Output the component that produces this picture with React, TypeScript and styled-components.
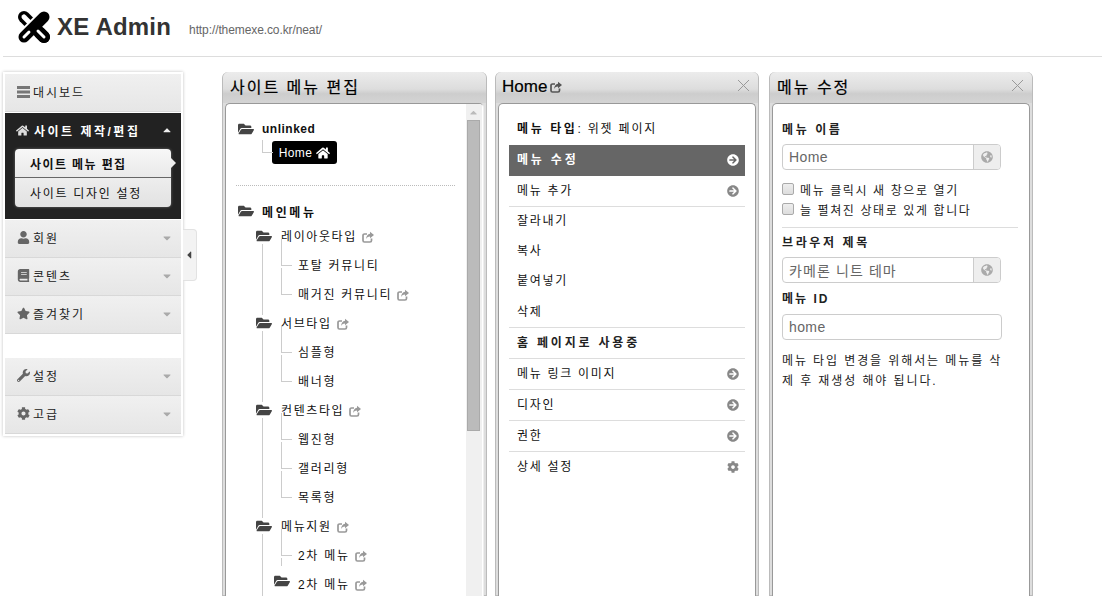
import React from "react";
import styled, { createGlobalStyle } from "styled-components";
import {
  FaArrowCircleRight,
  FaBook,
  FaCaretDown,
  FaCaretLeft,
  FaCaretUp,
  FaCog,
  FaFolderOpen,
  FaGlobeAmericas,
  FaHome,
  FaStar,
  FaUser,
  FaWrench,
} from "react-icons/fa";

const KO = `"Liberation Sans", "Noto Sans CJK KR", sans-serif`;

const GlobalStyle = createGlobalStyle`
  html, body { margin: 0; padding: 0; height: 596px; overflow: hidden; background: #fff; }
  body { font-family: ${KO}; font-size: 12px; color: #111; }
  * { box-sizing: border-box; }
`;

function Logo() {
  return (
    <svg width="34" height="34" viewBox="0 0 34 34">
      <path d="M7 7 L27 27" stroke="#000" strokeWidth="12" strokeLinecap="round" />
      <path d="M7 7 L13 13" stroke="#fff" strokeWidth="5" strokeLinecap="round" />
      <path d="M27 7 L7 27" stroke="#fff" strokeWidth="15" />
      <path d="M27 7 L7 27" stroke="#000" strokeWidth="11" strokeLinecap="round" />
      <path d="M7 27 L12 22" stroke="#fff" strokeWidth="3" strokeLinecap="round" />
      <path d="M19 19 L27 27" stroke="#000" strokeWidth="12" strokeLinecap="round" />
      <path d="M21 21 L27 27" stroke="#fff" strokeWidth="3" strokeLinecap="round" />
    </svg>
  );
}

function ListIcon() {
  return (
    <svg width="13" height="12" viewBox="0 0 13 12">
      <path d="M0 0h13v3H0zM0 4.500h13v3H0zM0 9h13v3H0z" fill="#777" />
    </svg>
  );
}

function LinkGlyph({ color = "#999" }: { color?: string }) {
  return (
    <svg width="12" height="12" viewBox="0 0 12 12">
      <path
        d="M9.500 7.500v2a1.500 1.500 0 0 1-1.500 1.500H2.500A1.500 1.500 0 0 1 1 9.500v-5A1.500 1.500 0 0 1 2.500 3H5"
        fill="none"
        stroke={color}
        strokeWidth="1.700"
      />
      <path d="M8 .800 12 4 8 7.200V5.500C6.200 5.500 5 6.300 4.200 8 4.200 5.300 5.600 3 8 2.700z" fill={color} />
    </svg>
  );
}

const sideMenu = [
  { label: "회원", icon: <FaUser /> },
  { label: "콘텐츠", icon: <FaBook /> },
  { label: "즐겨찾기", icon: <FaStar /> },
];

const sideMenuBottom = [
  { label: "설정", icon: <FaWrench /> },
  { label: "고급", icon: <FaCog /> },
];

const actions = [
  { label: "메뉴 수정", active: true, arrow: true, h: 31 },
  { label: "메뉴 추가", arrow: true, line: true, h: 31 },
  { label: "잘라내기", h: 30 },
  { label: "복사", h: 30 },
  { label: "붙여넣기", h: 30 },
  { label: "삭제", line: true, h: 31 },
  { label: "홈 페이지로 사용중", bold: true, line: true, h: 31 },
  { label: "메뉴 링크 이미지", arrow: true, line: true, h: 31 },
  { label: "디자인", arrow: true, line: true, h: 31 },
  { label: "권한", arrow: true, line: true, h: 31 },
  { label: "상세 설정", cog: true, h: 31 },
];

const groups = [
  { label: "레이아웃타입", items: [{ t: "포탈 커뮤니티" }, { t: "매거진 커뮤니티", link: true }] },
  { label: "서브타입", items: [{ t: "심플형" }, { t: "배너형" }] },
  { label: "컨텐츠타입", items: [{ t: "웹진형" }, { t: "갤러리형" }, { t: "목록형" }] },
  { label: "메뉴지원", items: [{ t: "2차 메뉴", link: true }, { t: "2차 메뉴", link: true, folder: true }] },
];

export default function App() {
  return (
    <>
      <GlobalStyle />
      <Header>
        <Logo />
        <Brand>XE Admin</Brand>
        <SiteUrl>http://themexe.co.kr/neat/</SiteUrl>
      </Header>
      <Main>
        <Sidebar>
          <SideItem>
            <SideIcon><ListIcon /></SideIcon>대시보드
          </SideItem>
          <SideOpen>
            <SideOpenTitle>
              <SideIcon $light><FaHome /></SideIcon>사이트 제작/편집
              <Caret $light><FaCaretUp /></Caret>
            </SideOpenTitle>
            <SubMenu>
              <SubItem $current>사이트 메뉴 편집</SubItem>
              <SubItem>사이트 디자인 설정</SubItem>
            </SubMenu>
          </SideOpen>
          {sideMenu.map(m => (
            <SideItem key={m.label}>
              <SideIcon>{m.icon}</SideIcon>{m.label}
              <Caret><FaCaretDown /></Caret>
            </SideItem>
          ))}
          <SideGap />
          {sideMenuBottom.map(m => (
            <SideItem key={m.label}>
              <SideIcon>{m.icon}</SideIcon>{m.label}
              <Caret><FaCaretDown /></Caret>
            </SideItem>
          ))}
        </Sidebar>
        <Handle><FaCaretLeft /></Handle>
        <Panels>
          <Panel $w={265}>
            <PanelHead><PanelTitle>사이트 메뉴 편집</PanelTitle></PanelHead>
            <TreeBody>
              <Tree>
                <RootRow $latin><Folder><FaFolderOpen /></Folder>unlinked</RootRow>
                <BadgeRow>
                  <Badge>Home <FaHome size={14} /></Badge>
                </BadgeRow>
                <Dotted />
                <RootRow><Folder><FaFolderOpen /></Folder>메인메뉴</RootRow>
                <Groups>
                  {groups.map(g => (
                    <div key={g.label}>
                      <GroupRow>
                        <Folder><FaFolderOpen /></Folder>
                        <span>{g.label}</span>
                        <LinkIcon><LinkGlyph /></LinkIcon>
                      </GroupRow>
                      {g.items.map((it, i) => (
                        <LeafRow key={i} $folder={it.folder}>
                          {it.folder && <LeafFolder><FaFolderOpen /></LeafFolder>}
                          <span>{it.t}</span>
                          {it.link && <LinkIcon><LinkGlyph /></LinkIcon>}
                        </LeafRow>
                      ))}
                    </div>
                  ))}
                </Groups>
              </Tree>
              <ScrollBar>
                <ScrollArrow><FaCaretUp /></ScrollArrow>
                <ScrollThumb />
              </ScrollBar>
            </TreeBody>
          </Panel>
          <Panel $w={264}>
            <PanelHead>
              <HomeTitle>Home <LinkGlyph color="#555" /></HomeTitle>
              <Close />
            </PanelHead>
            <MenuBody>
              <TypeRow><b>메뉴 타입</b>: 위젯 페이지</TypeRow>
              {actions.map(a => (
                <ActionRow key={a.label} $active={a.active} $line={a.line} $bold={a.bold} $h={a.h}>
                  {a.label}
                  {a.arrow && <ActionIcon $active={a.active}><FaArrowCircleRight /></ActionIcon>}
                  {a.cog && <ActionIcon><FaCog /></ActionIcon>}
                </ActionRow>
              ))}
            </MenuBody>
          </Panel>
          <Panel $w={264}>
            <PanelHead>
              <PanelTitle>메뉴 수정</PanelTitle>
              <Close />
            </PanelHead>
            <FormBody>
              <Label>메뉴 이름</Label>
              <InputGroup>
                <InputText>Home</InputText>
                <Addon><FaGlobeAmericas /></Addon>
              </InputGroup>
              <Checks>
                <CheckRow><CheckBox />메뉴 클릭시 새 창으로 열기</CheckRow>
                <CheckRow><CheckBox />늘 펼쳐진 상태로 있게 합니다</CheckRow>
              </Checks>
              <Rule />
              <Label>브라우저 제목</Label>
              <InputGroup>
                <InputText $wide>카메론 니트 테마</InputText>
                <Addon><FaGlobeAmericas /></Addon>
              </InputGroup>
              <Label $tight>메뉴 ID</Label>
              <PlainInput>home</PlainInput>
              <Help>메뉴 타입 변경을 위해서는 메뉴를 삭제 후 재생성 해야 됩니다.</Help>
            </FormBody>
          </Panel>
        </Panels>
      </Main>
    </>
  );
}

const Header = styled.header`
  height: 57px;
  margin-left: 3px;
  padding: 0 0 3px 14px;
  display: flex;
  align-items: center;
  border-bottom: 1px solid #ddd;
`;

const Brand = styled.div`
  margin-left: 6px;
  font-size: 24px;
  font-weight: 700;
  color: #333;
  letter-spacing: 0.2px;
`;

const SiteUrl = styled.div`
  margin: 6px 0 0 18px;
  font-size: 12px;
  letter-spacing: -0.1px;
  color: #666;
`;

const Main = styled.main`
  display: flex;
  align-items: flex-start;
  padding: 15px 0 0 3px;
`;

const Sidebar = styled.nav`
  width: 180px;
  flex: none;
  padding: 2px;
  background: #fff;
  box-shadow: 0 0 3px rgba(0, 0, 0, 0.25);
  display: flex;
  flex-direction: column;
`;

const SideItem = styled.div`
  height: 38px;
  padding: 0 0 2px 12px;
  display: flex;
  align-items: center;
  font-size: 12px;
  letter-spacing: 2px;
  color: #222;
  background: linear-gradient(#f0f0f0, #e6e6e6);
  border-bottom: 1px solid #d8d8d8;
`;

const SideIcon = styled.span<{ $light?: boolean }>`
  width: ${p => (p.$light ? 18 : 16)}px;
  display: inline-flex;
  font-size: 13px;
  color: ${p => (p.$light ? "#ddd" : "#666")};
`;

const Caret = styled.span<{ $light?: boolean }>`
  margin-left: auto;
  margin-right: 8px;
  display: inline-flex;
  font-size: 12px;
  color: ${p => (p.$light ? "#eee" : "#aaa")};
`;

const SideOpen = styled.div`
  height: 106px;
  margin: 1px 0;
  background: #222;
`;

const SideOpenTitle = styled.div`
  height: 34px;
  padding-left: 11px;
  display: flex;
  align-items: center;
  font-size: 12px;
  font-weight: 700;
  letter-spacing: 2.500px;
  color: #fff;
`;

const SubMenu = styled.div`
  margin: 2px 10px 0;
  border-radius: 4px;
  box-shadow: 0 0 3px rgba(255, 255, 255, 0.35);
`;

const SubItem = styled.div<{ $current?: boolean }>`
  position: relative;
  height: 29px;
  padding-left: 15px;
  display: flex;
  align-items: center;
  font-size: 12px;
  letter-spacing: ${p => (p.$current ? 1.400 : 1.700)}px;
  font-weight: ${p => (p.$current ? 700 : 400)};
  color: #111;
  background: ${p => (p.$current ? "linear-gradient(#f7f7f7, #e9e9e9)" : "linear-gradient(#ededed, #e2e2e2)")};
  border-radius: ${p => (p.$current ? "4px 4px 0 0" : "0 0 4px 4px")};
  border-bottom: ${p => (p.$current ? "1px solid #666" : "0")};

  ${p =>
    p.$current &&
    `&::after {
      content: "";
      position: absolute;
      right: -5px;
      top: 9px;
      border-left: 5px solid #eee;
      border-top: 5px solid transparent;
      border-bottom: 5px solid transparent;
    }`}
`;

const SideGap = styled.div`
  height: 24px;
`;

const Handle = styled.div`
  width: 14px;
  height: 52px;
  margin-top: 157px;
  flex: none;
  display: flex;
  align-items: center;
  font-size: 12px;
  color: #444;
  background: #f3f3f3;
  border: 1px solid #e2e2e2;
  border-left: 0;
  border-radius: 0 4px 4px 0;
`;

const Panels = styled.div`
  display: flex;
  margin-left: 25px;
  gap: 8px;
`;

const Panel = styled.section<{ $w: number }>`
  width: ${p => p.$w}px;
  height: 524px;
  flex: none;
  padding: 0 2px;
  background: #ddd;
  border: 1px solid #bbb;
  border-top: 0;
  border-radius: 6px 6px 0 0;

  & + & + & {
    margin-left: 2px;
  }
`;

const PanelHead = styled.div`
  position: relative;
  height: 31px;
  margin: 0 -2px;
  padding: 0 0 3px 7px;
  display: flex;
  align-items: center;
  border-radius: 6px 6px 0 0;
  background: linear-gradient(#ececec 0, #dddddd 55%, #cdcdcd 70%, #d4d4d4 100%);
`;

const PanelTitle = styled.h2`
  margin: 0;
  font-size: 16px;
  font-weight: 400;
  letter-spacing: 2px;
  color: #000;
  -webkit-text-stroke: 0.2px #000;
`;

const HomeTitle = styled(PanelTitle)`
  margin-left: -1px;
  font-size: 17px;
  letter-spacing: 0;
  display: flex;
  align-items: center;
  gap: 3px;
  padding-top: 2px;
`;

const Close = styled.span`
  position: absolute;
  right: 9px;
  top: 8px;
  width: 11px;
  height: 11px;
  background:
    linear-gradient(45deg, transparent 46%, #999 46%, #999 54%, transparent 54%),
    linear-gradient(-45deg, transparent 46%, #999 46%, #999 54%, transparent 54%);
`;

const TreeBody = styled.div`
  height: 493px;
  display: flex;
  background: #fff;
  border: 1px solid #999;
  border-bottom: 0;
  border-right-color: #eee;
  border-radius: 5px 5px 0 0;
  overflow: hidden;
`;

const Tree = styled.div`
  flex: 1;
  min-width: 0;
  padding: 13px 0 0 10px;
`;

const RootRow = styled.div<{ $latin?: boolean }>`
  height: 24px;
  padding-left: 2px;
  display: flex;
  align-items: center;
  gap: 7px;
  font-size: 12px;
  font-weight: 700;
  letter-spacing: ${p => (p.$latin ? 0.500 : 2.600)}px;
  color: #111;
`;

const Folder = styled.span`
  width: 17px;
  display: inline-flex;
  font-size: 16px;
  color: #444;
`;

const BadgeRow = styled.div`
  position: relative;
  height: 24px;
  padding-left: 36px;

  &::before {
    content: "";
    position: absolute;
    left: 26px;
    top: -1px;
    width: 10px;
    height: 12px;
    border-left: 1px solid #ccc;
    border-bottom: 1px solid #ccc;
  }
`;

const Badge = styled.div`
  width: 65px;
  height: 23px;
  display: flex;
  align-items: center;
  justify-content: center;
  gap: 4px;
  font-size: 12px;
  letter-spacing: 0.4px;
  color: #fff;
  background: #000;
  border-radius: 3px;
`;

const Dotted = styled.div`
  width: 219px;
  margin: 20px 0 13px;
  border-top: 1px dotted #bbb;
`;

const Groups = styled.div`
  position: relative;
  padding-left: 20px;
  margin-top: -2px;

  &::before {
    content: "";
    position: absolute;
    left: 26px;
    top: 20px;
    bottom: -40px;
    border-left: 1px solid #ccc;
  }
`;

const GroupRow = styled.div`
  position: relative;
  z-index: 1;
  height: 29px;
  display: flex;
  align-items: center;
  font-size: 12px;
  letter-spacing: 1.600px;

  ${Folder} {
    margin-right: 8px;
    background: #fff;
  }
`;

const LeafRow = styled.div<{ $folder?: boolean }>`
  position: relative;
  height: 29px;
  padding-left: 42px;
  display: flex;
  align-items: center;
  font-size: 12px;
  letter-spacing: 1.700px;

  &::before {
    content: "";
    position: absolute;
    left: 25px;
    top: -11px;
    width: 10px;
    height: ${p => (p.$folder ? 8 : 26)}px;
    border-left: 1px solid #ccc;
    border-bottom: ${p => (p.$folder ? "0" : "1px solid #ccc")};
  }
`;

const LeafFolder = styled.span`
  position: absolute;
  left: 18px;
  top: 4px;
  display: inline-flex;
  font-size: 16px;
  color: #444;
`;

const LinkIcon = styled.span`
  margin-left: 5px;
  display: inline-flex;
  padding-top: 2px;
`;

const ScrollBar = styled.div`
  width: 16px;
  flex: none;
  margin-right: 1px;
  padding: 1px 2px 0 1px;
  background: #f0f0f0;
`;

const ScrollArrow = styled.div`
  height: 15px;
  display: flex;
  justify-content: center;
  align-items: center;
  font-size: 11px;
  color: #bbb;
`;

const ScrollThumb = styled.div`
  height: 311px;
  background: #bbb;
  border: 1px solid #aaa;
`;

const MenuBody = styled(TreeBody)`
  display: block;
  border-right-color: #999;
  padding: 6px 10px 0;
`;

const TypeRow = styled.div`
  height: 35px;
  padding-left: 8px;
  display: flex;
  align-items: center;
  font-size: 12px;
  letter-spacing: 1.800px;
  white-space: pre-wrap;

  b {
    letter-spacing: 2.600px;
  }
`;

const ActionRow = styled.div<{ $active?: boolean; $line?: boolean; $bold?: boolean; $h: number }>`
  height: ${p => p.$h}px;
  padding: 0 6px 4px 8px;
  display: flex;
  align-items: center;
  justify-content: space-between;
  font-size: 12px;
  letter-spacing: ${p => (p.$active || p.$bold ? 2.800 : 1.700)}px;
  font-weight: ${p => (p.$active || p.$bold ? 700 : 400)};
  color: ${p => (p.$active ? "#fff" : p.$bold ? "#222" : "#111")};
  background: ${p => (p.$active ? "#666" : "transparent")};
  border-bottom: 1px solid ${p => (p.$line ? "#ddd" : "transparent")};
`;

const ActionIcon = styled.span<{ $active?: boolean }>`
  margin-top: 4px;
  display: inline-flex;
  font-size: 12px;
  color: ${p => (p.$active ? "#fff" : "#888")};
`;

const FormBody = styled(TreeBody)`
  display: block;
  border-right-color: #999;
  padding: 15px 11px 0 9px;
`;

const Label = styled.div<{ $tight?: boolean }>`
  height: 18px;
  margin-top: ${p => (p.$tight ? "5px" : "0")};
  display: flex;
  align-items: center;
  font-size: 12px;
  font-weight: 700;
  letter-spacing: ${p => (p.$tight ? 2 : 2.600)}px;
  color: #222;
`;

const InputGroup = styled.div`
  width: 219px;
  height: 26px;
  margin-top: 7px;
  display: flex;
  border: 1px solid #ccc;
  border-radius: 4px;
  overflow: hidden;
`;

const InputText = styled.div<{ $wide?: boolean }>`
  flex: 1;
  padding-left: 6px;
  display: flex;
  align-items: center;
  font-size: 14px;
  letter-spacing: ${p => (p.$wide ? 1.100 : 0.400)}px;
  color: #666;
`;

const Addon = styled.div`
  width: 27px;
  display: flex;
  align-items: center;
  justify-content: center;
  font-size: 12px;
  color: #aaa;
  background: #eee;
  border-left: 1px solid #ccc;
`;

const Checks = styled.div`
  margin-top: 9px;
`;

const CheckRow = styled.div`
  height: 20px;
  display: flex;
  align-items: center;
  gap: 6px;
  font-size: 12px;
  letter-spacing: 1.600px;
  color: #222;
`;

const CheckBox = styled.span`
  width: 12px;
  height: 12px;
  border: 1px solid #aaa;
  border-radius: 2px;
  background: linear-gradient(#eee, #ddd);
`;

const Rule = styled.div`
  margin: 8px 0 4px;
  border-top: 1px solid #ddd;
`;

const PlainInput = styled.div`
  width: 220px;
  height: 26px;
  margin-top: 8px;
  padding-left: 6px;
  display: flex;
  align-items: center;
  font-size: 14px;
  letter-spacing: 0.4px;
  color: #666;
  border: 1px solid #ccc;
  border-radius: 4px;
`;

const Help = styled.p`
  width: 222px;
  margin: 11px 0 0;
  font-size: 12px;
  line-height: 20px;
  letter-spacing: 1.900px;
  color: #222;
  word-break: break-all;
`;
